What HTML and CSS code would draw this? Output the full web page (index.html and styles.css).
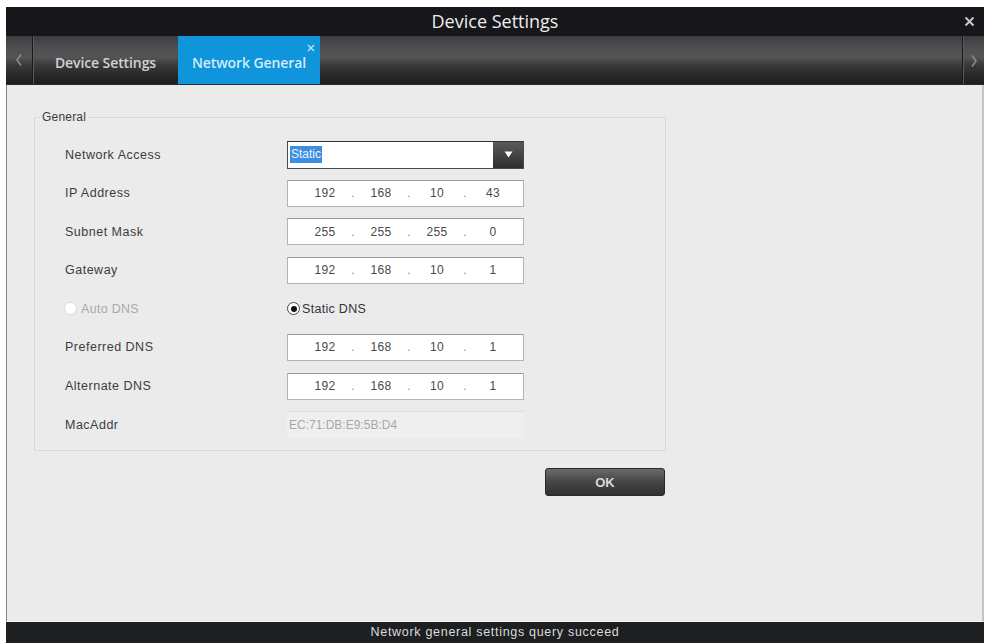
FILE: index.html
```html
<!DOCTYPE html>
<html>
<head>
<meta charset="utf-8">
<title>Device Settings</title>
<link rel="stylesheet" href="styles.css">
</head>
<body>
<div class="window">
  <div class="titlebar">
    <span></span>
    <span class="title">Device Settings</span>
    <span class="close"><svg width="11" height="11" viewBox="0 0 11 11"><path d="M1.5 1.5 L9.5 9.5 M9.5 1.5 L1.5 9.5" stroke="#c8c8c8" stroke-width="2" fill="none"/></svg></span>
  </div>
  <div class="tabbar">
    <div class="nav nav-left"><svg width="8" height="14" viewBox="0 0 8 14"><path d="M6 1.5 L2 7 L6 12.5" stroke="#8a8a8a" stroke-width="1.6" fill="none"/></svg></div>
    <div class="tab">Device Settings</div>
    <div class="tab active">Network General<svg class="tabx" width="8" height="8" viewBox="0 0 8 8"><path d="M1 1 L7 7 M7 1 L1 7" stroke="#bfe6ff" stroke-width="1.3" fill="none"/></svg></div>
    <div class="tabfill"></div>
    <div class="nav nav-right"><svg width="8" height="14" viewBox="0 0 8 14"><path d="M2 1.5 L6 7 L2 12.5" stroke="#8a8a8a" stroke-width="1.6" fill="none"/></svg></div>
  </div>
  <div class="content">
    <fieldset class="group">
      <legend>General</legend>
      <div class="form">
        <div class="label">Network Access</div>
        <div class="select"><span class="sel-text"><span class="hl">Static</span></span><span class="sel-btn"><svg width="9" height="7" viewBox="0 0 9 7"><path d="M0.5 0.5 H8.5 L4.5 6.5 Z" fill="#fff"/></svg></span></div>

        <div class="label">IP Address</div>
        <div class="ip"><span>192</span><i>.</i><span>168</span><i>.</i><span>10</span><i>.</i><span>43</span></div>

        <div class="label">Subnet Mask</div>
        <div class="ip"><span>255</span><i>.</i><span>255</span><i>.</i><span>255</span><i>.</i><span>0</span></div>

        <div class="label">Gateway</div>
        <div class="ip"><span>192</span><i>.</i><span>168</span><i>.</i><span>10</span><i>.</i><span>1</span></div>

        <div class="label radio disabled"><span class="dot"></span>Auto DNS</div>
        <div class="radio"><span class="dot on"></span>Static DNS</div>

        <div class="label">Preferred DNS</div>
        <div class="ip"><span>192</span><i>.</i><span>168</span><i>.</i><span>10</span><i>.</i><span>1</span></div>

        <div class="label">Alternate DNS</div>
        <div class="ip"><span>192</span><i>.</i><span>168</span><i>.</i><span>10</span><i>.</i><span>1</span></div>

        <div class="label">MacAddr</div>
        <div class="mac">EC:71:DB:E9:5B:D4</div>
      </div>
    </fieldset>
    <div class="actions"><button class="ok">OK</button></div>
  </div>
  <div class="status">Network general settings query succeed</div>
</div>
</body>
</html>
```
FILE: styles.css
```css
* { box-sizing: border-box; }
html, body { margin: 0; padding: 0; background: #fff; }
body { font-family: "Liberation Sans", Arial, sans-serif; }

.window {
  margin: 7px 0 0 6px;
  width: 978px;
  height: 636px;
  display: flex;
  flex-direction: column;
}

.titlebar {
  height: 29px;
  background: #16161b;
  display: grid;
  grid-template-columns: 1fr auto 1fr;
  align-items: center;
}
.title {
  font-family: "Open Sans", "Liberation Sans", sans-serif;
  font-size: 18px;
  color: #eeeeee;
  line-height: 29px;
}
.close { justify-self: end; padding-right: 9px; display: flex; }

.tabbar {
  height: 49px;
  display: flex;
  background: linear-gradient(#3d3d3f 0%, #4f4f51 25%, #545456 45%, #3a3a3b 60%, #262627 85%, #1e1e1f 100%);
  border-bottom: 1px solid #2a2a2a;
}
.nav {
  width: 27px;
  display: flex;
  align-items: center;
  justify-content: center;
}
.nav-left { border-right: 1px solid #1a1a1a; box-shadow: 1px 0 0 #5a5a5a; }
.nav-right { width: 22px; border-left: 1px solid #1a1a1a; box-shadow: inset 1px 0 0 #5a5a5a; padding-top: 2px; }
.tab {
  width: 145px;
  display: flex;
  align-items: center;
  justify-content: center;
  font-family: "Open Sans", "Liberation Sans", sans-serif;
  font-size: 14px;
  font-weight: 600;
  color: #d2d2d2;
  position: relative;
  padding-top: 4px;
  letter-spacing: -0.1px;
}
.tab.active {
  width: 142px;
  background: #1094dc;
  color: #d2ecfb;
}
.tabx { position: absolute; right: 5px; top: 8px; }
.tabfill { flex: 1; }

.content {
  flex: 1;
  background: #ebebeb;
  border-left: 1px solid #858585;
  border-right: 2px solid #c4c4c4;
  border-bottom: 1px solid #f6f6f6;
  padding: 25px 0 0 27px;
}

.group {
  width: 632px;
  margin: 0;
  padding: 17px 0 12px 0;
  border: 1px solid #d9d9d9;
}
.group legend {
  margin-left: 5px;
  padding: 0 2px;
  font-size: 12px;
  line-height: 14px;
  color: #3a3a3a;
  letter-spacing: 0.2px;
}

.form {
  margin-left: 30px;
  display: grid;
  grid-template-columns: 222px 237px;
  grid-auto-rows: 27px;
  row-gap: 11.6px;
  align-items: center;
}
.label {
  font-size: 12.5px;
  color: #3c3c3c;
  letter-spacing: 0.5px;
}

.select {
  height: 28px;
  display: flex;
  background: #fff;
  border: 1px solid #4a4a4a;
  border-top-color: #333;
}
.sel-text { flex: 1; display: flex; align-items: center; padding-left: 2px; }
.hl {
  background: #3d8ee0;
  color: #e8f4ff;
  font-size: 12px;
  padding: 1px 1px;
  line-height: 15px;
}
.sel-btn {
  width: 30px;
  background: linear-gradient(#5a5a5a, #2e2e2e);
  display: flex;
  align-items: center;
  justify-content: center;
}

.ip {
  height: 27px;
  background: #fff;
  border: 1px solid #b4b4b4;
  border-top-color: #9a9a9a;
  display: grid;
  grid-template-columns: 50px 6px 50px 6px 50px 6px 50px;
  padding-left: 12px;
  align-items: center;
  font-size: 12px;
  color: #4a4a4a;
  letter-spacing: 0.3px;
}
.ip span { text-align: center; }
.ip i { font-style: normal; text-align: center; color: #8a8a8a; }

.radio {
  display: flex;
  align-items: center;
  font-size: 12.5px;
  color: #333;
  letter-spacing: 0.3px;
}
.radio .dot {
  width: 13px;
  height: 13px;
  border-radius: 50%;
  border: 1px solid #444;
  background: #fff;
  margin-right: 2px;
  display: flex;
  align-items: center;
  justify-content: center;
}
.radio .dot.on::after {
  content: "";
  width: 6px;
  height: 6px;
  border-radius: 50%;
  background: #111;
}
.radio.disabled { color: #a9a9a9; margin-left: -1px; }
.radio.disabled .dot { border-color: #dcdcdc; margin-right: 4px; }

.mac {
  height: 27px;
  background: #efefef;
  border-top: 1px solid #e0e0e0;
  display: flex;
  align-items: center;
  padding-left: 2px;
  font-size: 12px;
  color: #a8a8a8;
}

.actions {
  width: 632px;
  display: flex;
  justify-content: flex-end;
  margin-top: 17px;
  padding-right: 1px;
}
.ok {
  width: 120px;
  height: 28px;
  border: 1px solid #2a2a2a;
  border-radius: 3px;
  background: linear-gradient(#6a6a6a, #454545 50%, #323232);
  color: #d8d8d8;
  font-family: "Liberation Sans", Arial, sans-serif;
  font-weight: bold;
  font-size: 13px;
  padding: 0;
}

.status {
  height: 21px;
  background: #1d1f21;
  color: #dcdcdc;
  font-size: 12.5px;
  letter-spacing: 0.7px;
  text-align: center;
  line-height: 21px;
}
```
